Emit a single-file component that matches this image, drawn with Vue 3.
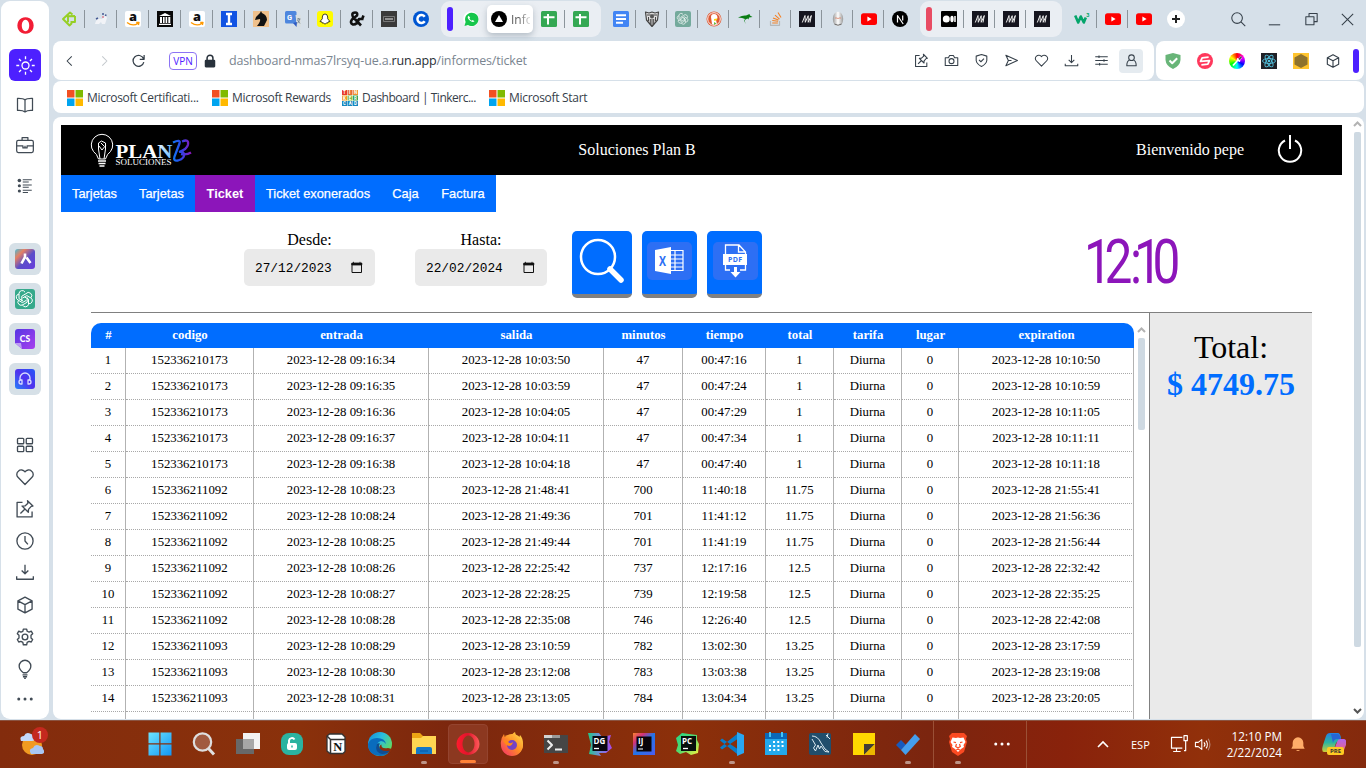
<script setup>
import { h } from 'vue'

const M = '<rect width="16" height="16" fill="#15151f" stroke="none"/><path d="M3.300 11.500 6 4.500M6 4.500 6.300 11.300 9.200 4.700 9.200 11.300 12.300 4.500M12.300 4.500 11 11.500" stroke="#eee" stroke-width="1"/>'
const amazon = '<rect width="16" height="16" rx="2" fill="#fff" stroke="none"/><text x="8" y="10" font-family="Open Sans" font-weight="800" font-size="13" textLength="8" lengthAdjust="spacingAndGlyphs" text-anchor="middle" fill="#111" stroke="none">a</text><path d="M2 11.500Q8 16 13 12.200 M11.200 11.500 14 11.300 13.400 14" stroke="#f90" stroke-width="1.300"/>'
const sheet = '<rect width="16" height="16" rx="1.500" fill="#34a853" stroke="none"/><path d="M2.500 6.200h11M7 3v10.500" stroke="#fff" stroke-width="2"/>'
const youtube = '<rect y="2.300" width="16" height="11.600" rx="2.500" fill="#f00" stroke="none"/><path d="M6.400 5.600v5l4.200-2.500z" fill="#fff" stroke="none"/>'
const knot = '<g stroke="#fff" stroke-width="1"><path d="M12 5.200a3.200 3.200 0 0 0-6 1.500v5l4 2.300 M6 7a3.200 3.200 0 0 0-1 6l4.400 2.600 4-2.300"/><path d="M5.300 13.500a3.200 3.200 0 0 0 4.600 4.200l4.300-2.500v-4.800 M9.500 18a3.200 3.200 0 0 0 6-.6v-5.200l-4-2.300 M15.600 16.700a3.200 3.200 0 0 0 2.700-5.500l-4.500-2.600-4.200 2.400 M18 10.700a3.200 3.200 0 0 0-5-4L8.800 9.200V14"/></g>'
const cube = '<path d="M12 2.500 20.500 7v10L12 21.500 3.500 17V7z M3.500 7 12 11.500 20.500 7 M12 11.500v10"/>'
const heart = '<path d="M12 21 3.600 12.400A5 5 0 0 1 4 5a5.300 5.300 0 0 1 8 .8A5.300 5.300 0 0 1 20 5a5 5 0 0 1 .4 7.400z"/>'
const pin = '<path d="M9 4H2.500v17.500H20.500V15"/><path d="m15 2 6.500 6.500-2 .3-3.300 3.700-.2 3.500-7.500-7.500 3.500-.2 3.500-3.300z M12 12l-5.500 5.500"/>'
const download = '<path d="M12 3v12M7.500 11 12 15.500 16.500 11M2 17v3.500h20V17"/>'

const icons = {
  codecademy: '<path d="M11.500 3.500 9 1.500 2 8l6.500 6.500 2.500-2.500M14 5 7 5.200v6M14 5v6L9.500 11" stroke="#96cf24" stroke-width="1.900"/>',
  dog: '<path d="M2 13q1-6 7-5l4-4 1 3-2 6H9l-1-2-2 2z" fill="#f1f3f7" stroke="none"/><path d="M9 3h2M12 4l1.500.5M3 8l2-1" stroke="#465a93"/><circle cx="10" cy="6" r=".8" fill="#df3e54" stroke="none"/>',
  amazon, amazon2: amazon, sheet, sheet2: sheet, youtube, M,
  museum: '<rect width="16" height="16" fill="#080808" stroke="none"/><path d="m2 5 6-3 6 3zM3 6h2v6H3zM6 6h1.600v6H6zM8.600 6h1.600v6H8.600zM11.300 6h2v6h-2zM2 12.700h12V14H2z" fill="#fff" stroke="none"/>',
  ibeam: '<rect width="16" height="16" fill="#1153e3" stroke="none"/><path d="M5 3h6M5 13h6M8 3v10" stroke="#fff" stroke-width="2.400"/>',
  knight: '<rect width="16" height="16" fill="#efc08b" stroke="none"/><path d="M4 15q4-5 3-7l-5 1 1-3 4-4 1-2 1 2q5 2 5 7l-3 6z" fill="#111" stroke="none"/>',
  translate: '<rect width="11.500" height="12.500" rx="1.500" fill="#4d86de" stroke="none"/><path d="M10.500 4H16v12H9.500l2-3.500z" fill="#d8dfe2" stroke="none"/><path d="m8 12 3.500 4L12 11z" fill="#2d5ac2" stroke="none"/><text x="2" y="9" font-family="Roboto" font-weight="700" font-size="7.500" fill="#fff" stroke="none">G</text><path d="M12 8h3.500M13.700 7v1M12 12.500q2.500-1.500 2.500-4.500M12.400 9l2.600 3.500" stroke="#637078" stroke-width=".7"/>',
  snap: '<rect width="16" height="16" rx="3" fill="#fffc00" stroke="none"/><path d="M5.300 6q.2-3 2.700-3t2.700 3v1.800l2.300 2.700-2 .5-.5 1.200-1.200-.1L8 13.200l-1.300-1.100-1.200.1L5 11l-2-.5 2.300-2.700z" fill="#fff" stroke="#111" stroke-width=".8"/>',
  amp: '<path d="M12 14.500 4 6Q2 1.500 6 1.500q3 0 2 3L3 8.500q-2.500 3.500 1 5 4 .5 6-5.500h4.500M14.500 4.500l-1.500 4" stroke="#111" stroke-width="2.600"/>',
  board: '<rect width="16" height="16" fill="#3a3a3a" stroke="none"/><rect x="2.500" y="5.500" width="11" height="5" stroke="#888" stroke-width=".8"/><path d="M4 8h8" stroke="#aaa" stroke-width="1.600"/>',
  coursera: '<circle cx="8" cy="8" r="8" fill="#0056d2" stroke="none"/><path d="M11.700 5.700a4 4 0 1 0 0 4.600" stroke="#fff" stroke-width="2.500"/>',
  whatsapp: '<circle cx="8" cy="8" r="7.800" fill="#fff" stroke="none"/><path d="M1.500 15 2.600 11A6.700 6.700 0 1 1 5 13.900z" fill="#16c64b" stroke="none"/><path d="M5.500 4.700q-2 1.700 1 4.600 3.200 3 5 1l-1.800-1.400-1 .8Q7 9 6.400 7.300l.8-.8z" fill="#fff" stroke="none"/>',
  triangle: '<circle cx="8" cy="8" r="8" fill="#000" stroke="none"/><path d="m8 4 4 7H4z" fill="#fff" stroke="none"/>',
  docs: '<rect width="16" height="16" rx="1.500" fill="#4285f4" stroke="none"/><path d="M3 4.200h10M3 8h10M3 11.800h7" stroke="#fff" stroke-width="1.900"/>',
  crest: '<path d="M1.500 1 5 2l3-1 3 1 3.500-1-1 8L8 15.500 2.500 9z" fill="#ddd" stroke="#444" stroke-width="1.200"/><path d="M4.500 6v4M6.300 8v5M8 8v6M9.700 8v5M11.500 6v4M3 4h10" stroke="#333" stroke-width=".9"/><circle cx="8" cy="5.500" r="2" fill="#555" stroke="none"/>',
  gpt: '<rect width="16" height="16" rx="2" fill="#74aa9c" stroke="none"/><g transform="scale(.667)">' + knot + '</g>',
  duck: '<circle cx="8" cy="8" r="7.500" fill="#de5833" stroke="none"/><circle cx="8" cy="8" r="6.300" stroke="#fff" stroke-width=".9"/><path d="M6 13 5 6q0-3 3-3 3.500 0 3.500 4l-1.500 2 1 4.200q-3 1.300-5-.2z" fill="#fff" stroke="none"/><path d="m8 8 3.500-.5-1 2-2.500.3z" fill="#fdd20a" stroke="none"/><path d="m8 11 2.500 1.500L8 14" fill="#65bc46" stroke="none"/>',
  kangaroo: '<path d="M1 6.500q5-2.500 8-2l3.500-1.500.5 1.500 2.500 1.500-3.500.5-.5 2-1-1-2 1-1 1.500L9 13 7 10l1-2-3-1z" fill="#0a7d14" stroke="none"/>',
  stack: '<path d="M2.500 10v4.300h9V10" stroke="#b5b8ba" stroke-width="1.200"/><path d="M4.200 12h5.700M4.300 9.500l5.800.8M5 7l5.500 2M7 4.200l4.500 4M10 1.500 13 6.500" stroke="#f48024" stroke-width="1.100"/>',
  egg: '<ellipse cx="8" cy="8" rx="5.200" ry="7.300" fill="url(#egg)" stroke="none"/><path d="M5 7h2l1 .7 1-.7h2" stroke="#da7355" stroke-width=".7"/><path d="M4.500 13q3.500 2.500 7 0" stroke="#666" stroke-width="1"/>',
  next: '<circle cx="8" cy="8" r="8" fill="#000" stroke="none"/><path d="M5.500 11.500v-7l5.700 8.500M10.700 4.500v5" stroke="#fff" stroke-width="1.200"/>',
  medium: '<rect width="16" height="16" rx="1" fill="#000" stroke="none"/><circle cx="5.300" cy="8" r="3.500" fill="#fff" stroke="none"/><ellipse cx="11" cy="8" rx="1.700" ry="3.300" fill="#fff" stroke="none"/><path d="M14 5v6" stroke="#fff"/>',
  w3: '<path d="m1.200 4.500 3 7 2.600-6 3 6 2-5" stroke="#04a56b" stroke-width="2.600"/><text x="12.300" y="6" font-family="Roboto" font-weight="700" font-size="5.500" fill="#04a56b" stroke="none">3</text>',
  ms: '<path d="M0 0h7.500v7.500H0z" fill="#f25022" stroke="none"/><path d="M8.500 0H16v7.500H8.500z" fill="#7fba00" stroke="none"/><path d="M0 8.500h7.500V16H0z" fill="#00a4ef" stroke="none"/><path d="M8.500 8.500H16V16H8.500z" fill="#ffb900" stroke="none"/>',
  tinker: '<path d="M0 0h5v5H0z" fill="#e83b2c" stroke="none"/><path d="M5.500 0h5v5h-5z" fill="#e76b34" stroke="none"/><path d="M11 0h5v5h-5z" fill="#f19132" stroke="none"/><path d="M0 5.500h5v5H0z" fill="#f19b21" stroke="none"/><path d="M5.500 5.500h5v5h-5z" fill="#86b940" stroke="none"/><path d="M11 5.500h5v5h-5z" fill="#2fa355" stroke="none"/><path d="M0 11h5v5H0zM5.500 11h5v5h-5zM11 11h5v5h-5z" fill="#1687bf" stroke="none"/><g font-family="Roboto" font-weight="700" font-size="4.500" fill="#fff" stroke="none"><text x="1 7 12" y="4.200">TIN</text><text x="1 6.700 12" y="9.700">KER</text><text x="1 6.700 12" y="15.200">CAD</text></g>',
  shield: '<path d="M8 0 15.500 2v5Q15 13 8 16 1 13 .5 7V2z" fill="#68b578" stroke="none"/><path d="m4.500 7.500 2.700 2.700 5-5" stroke="#fff" stroke-width="2"/>',
  pink: '<circle cx="8" cy="8" r="8" fill="#ff385c" stroke="none"/><path d="M12 4.500H5.500L3.500 8h9l-2 3.500H4" stroke="#fff" stroke-width="1.800" transform="rotate(-6 8 8)"/>',
  react: '<rect width="16" height="16" fill="#202127" stroke="none"/><g stroke="#53c1de" stroke-width=".9"><ellipse cx="8" cy="8" rx="6.500" ry="2.500"/><ellipse cx="8" cy="8" rx="6.500" ry="2.500" transform="rotate(60 8 8)"/><ellipse cx="8" cy="8" rx="6.500" ry="2.500" transform="rotate(120 8 8)"/></g><circle cx="8" cy="8" r="1.300" fill="#53c1de" stroke="none"/>',
  hex: '<rect width="16" height="16" fill="#ffc42e" stroke="none"/><path d="m8 1 6.500 3.500v7L8 15l-6.500-3.500v-7z" fill="#8e722c" stroke="none"/>',
  dropper: '<path d="m4 12.500 5-5.500M8 5.500l3 3M9.500 7l3-3" stroke="#fff" stroke-width="1.800"/><path d="m10 6.500 2.500-2.800" stroke="#444" stroke-width="1.400"/>',
  opera: '<path fill-rule="evenodd" d="M12 1.500a10.300 10.500 0 1 0 .01 0zM12 4.600a4.700 7.400 0 1 1-.01 0z" fill="#f21d35" stroke="none"/>',
  operaBig: '<path fill-rule="evenodd" d="M12 1a11.500 11 0 1 0 .01 0zM12.500 3.500a6 8.500 0 1 1-.01 0z" fill="url(#op)" stroke="none"/>',
  sun: '<circle cx="12" cy="12" r="4"/><path d="M12 1.500v3.300M12 19.200v3.300M1.500 12h3.300M19.200 12h3.300M4.600 4.600l2.300 2.300M17.100 17.100l2.300 2.300M4.600 19.400l2.300-2.300M17.100 6.900l2.300-2.300"/>',
  book: '<path d="M12 6q-2-2.200-9-2v14.500q6-.5 9 1.800 3-2.300 9-1.800V4q-7-.2-9 2v14"/>',
  briefcase: '<rect x="2" y="6.500" width="20" height="14.500" rx="2"/><path d="M8.500 6V3h7v3M2 13h7.500v2.500h5V13H22M12 13v2"/>',
  list: '<path d="M9 5h12M9 8h8M9 12h12M9 15h8M9 19h12M9 22h7" stroke-width="1.600"/><g fill="currentColor" stroke="none"><circle cx="4.500" cy="6" r="2.400"/><circle cx="4.500" cy="13" r="2.100"/><circle cx="4.500" cy="20" r="2.100"/></g>',
  aria: '<rect x="2" y="2" width="20" height="20" rx="3" fill="url(#aria)" stroke="none"/><path d="M12 6.500v3.500l-3.500 6.500M13.500 10.500l4 5.500" stroke="#fff" stroke-width="2.600"/>',
  gptBig: '<rect x="2" y="2" width="20" height="20" rx="3" fill="#36a98b" stroke="none"/>' + knot,
  cs: '<path d="M5 2h14q3 0 3 3v14q0 3-3 3H9l-7-6V5q0-3 3-3z" fill="url(#violet)" stroke="none"/><path d="M2 16h6l1 6z" fill="#bd9bf2" stroke="none"/><text x="12" y="15" text-anchor="middle" font-family="Lato" font-weight="900" font-size="8.500" fill="#fff" stroke="none">CS</text>',
  phones: '<rect x="2" y="2" width="20" height="20" rx="3" fill="url(#violet2)" stroke="none"/><path d="M7 14v-3a5 5 0 0 1 10 0v3M9 13v4H8a2 2 0 0 1 0-4zM15 13v4h1a2 2 0 0 0 0-4z" stroke="#d9dcff" stroke-width="1.300"/>',
  grid: '<rect x="3" y="4" width="7.500" height="6.500" rx="1"/><rect x="13.500" y="4" width="7.500" height="6.500" rx="1"/><rect x="3" y="13.500" width="7.500" height="6.500" rx="1"/><rect x="13.500" y="13.500" width="7.500" height="6.500" rx="1"/>',
  heart, pin, cube, download,
  clock: '<circle cx="12" cy="12" r="9.700"/><path d="M12 6v6l3.500 4"/>',
  downloadSide: '<path d="M12 2v10M8 9l4 4 4-4M2 16v3.500h20V16"/>',
  gear: '<path d="m10 2.500-.6 2.700-2.300 1L4.500 5 2.800 8l2 1.900v3.200L2.800 15l1.700 3 2.600-.8 2.300 1.300.6 2.800h4l.6-2.800 2.300-1.300 2.600.8 1.700-3-2-1.900V9.900l2-1.900-1.700-3-2.600 1.100-2.300-1L14 2.500z"/><circle cx="12" cy="12" r="3.400"/>',
  bulb: '<path d="M10 16.500Q5 13 5 8.500a7 7 0 0 1 14 0q0 4.500-5 8zM9 19h6M9.500 21.300h5M11 23.300h2"/>',
  dots: '<g fill="currentColor" stroke="none"><circle cx="4.500" cy="12" r="1.800"/><circle cx="12" cy="12" r="1.800"/><circle cx="19.500" cy="12" r="1.800"/></g>',
  search: '<circle cx="10" cy="10" r="7.500"/><path d="m15.500 15.500 6 6"/>',
  min: '<path d="M4 19.500h16"/>',
  restore: '<rect x="4" y="8" width="11.500" height="11.500"/><path d="M8.500 8V3.500H20V15h-4.500"/>',
  close: '<path d="m4 4 16 16M20 4 4 20"/>',
  back: '<path d="m15 4-8 8 8 8"/>', fwd: '<path d="m9 4 8 8-8 8"/>',
  reload: '<path d="M20 9a8.700 8.700 0 1 0 .5 5.500M21 3v7h-7"/>',
  camera: '<path d="M2 7.500h5L9 4h6l2 3.500h5V20H2z"/><circle cx="12" cy="13" r="4"/>',
  safe: '<path d="M12 2.500 20.500 5v7q-1 6-8.500 9.500Q4.500 18 3.500 12V5zM8 11l3 3 5-5"/>',
  send: '<path d="M3 3.500 21.500 12 3 20.500 7 12z M7 12h5"/>',
  sliders: '<path d="M2 6h20M2 12h20M2 18h20M8 4v4M16 10v4M9 16v4"/>',
  person: '<circle cx="12" cy="7.500" r="4.500"/><path d="M8.500 11.500Q4.500 12.500 4.500 20.500h15q0-8-4-9"/>',
  lock: '<rect x="3" y="10" width="18" height="13" rx="2" fill="currentColor" stroke="none"/><path d="M7 11V7a5 5 0 0 1 10 0v4" stroke-width="2.600"/>',
  windows: '<path d="M.5.5H11.300V11.300H.5zM12.500.5H23.500V11.300h-11zM.5 12.500H11.300V23.500H.5zM12.500 12.500H23.500V23.500h-11z" fill="url(#win)" stroke="none"/>',
  find: '<circle cx="10.500" cy="10" r="8.700" fill="#a15a3f" stroke="#dedede" stroke-width="2.200"/><path d="m16.500 16.500 5.500 6" stroke="#e0e0e0" stroke-width="3"/>',
  task: '<path d="M7 1h17v16H7z" fill="#f2f2f2" stroke="none"/><path d="M0 7h18v15H0z" fill="#686868" stroke="none"/><path d="M7 7h11v10H7z" fill="#a7a7a7" stroke="none"/>',
  vault: '<rect x="1" y="1" width="22" height="22" rx="8" fill="#2bb3a0" stroke="none"/><rect x="7" y="11" width="10" height="7" rx="2" fill="#fff" stroke="none"/><path d="M9 12V8.500a3 3 0 0 1 5.500-1" stroke="#fff" stroke-width="2"/><path d="M12 13.500v2" stroke="#2bb3a0"/>',
  notion: '<path d="m3 4 2.500-2H18l3 3v14.500L19 21.500H6L3 19z" fill="#fff" stroke="#333" stroke-width="1.300"/><path d="m3 4 3.500 3.500H21M6.500 7.500v14" stroke="#333"/><text x="13.700" y="18.500" text-anchor="middle" font-family="Liberation Serif" font-weight="700" font-size="13" textLength="9" lengthAdjust="spacingAndGlyphs" fill="#111" stroke="none">N</text>',
  edge: '<circle cx="12" cy="12" r="12" fill="url(#edge)" stroke="none"/><path d="M0 12q2-6 9-6 8 0 9 6-2-3-5-3-4 1-4 5 1 7 12 6-3 4-9 4Q0 23 0 12" fill="#0a6cbd" stroke="none"/><path d="M13.500 12.500q-1 4.500 6.500 3.500l4 1-1.500 3q-9 3-11-3-1-3 2-4.500z" fill="#892e0c" stroke="none"/><path d="M9 12q-3 8 5 10 5 0 8-3.500-9 2-11-3.500-.5-2 1-3.500-2-.5-3 .5z" fill="#104d91" stroke="none"/>',
  folder: '<path d="M0 1h8l3 3h13v18H0z" fill="#eda414" stroke="none"/><path d="M0 6h9l2-2h13v18H0z" fill="#ffd652" stroke="none"/><path d="M4 22v-5q0-2 2-2h12q2 0 2 2v5z" fill="#1477c8" stroke="none"/><path d="M8 19h8" stroke="#0556a4" stroke-width="1"/>',
  firefox: '<circle cx="12" cy="13" r="11" fill="url(#fire)" stroke="none"/><path d="M5 6 4 2Q0 7 1 13q3 11 12 10 10-1 10-11 0-6-3-9l-1 3Q16 5 15 0q-5 3-4 7z" fill="url(#fire)" stroke="none"/><circle cx="12" cy="13" r="5" fill="#7443c5" stroke="none"/><path d="m3 8 5 1q1 4 5 1-1 4-4 4-4-1-6-6z" fill="#ff8a16" stroke="none"/>',
  terminal: '<path d="M0 3h24v18H0z" fill="#464646" stroke="none"/><path d="M0 3h8v3H0z" fill="#d2d2d2" stroke="none"/><path d="M8 3h8v3H8z" fill="#999" stroke="none"/><path d="m3.500 8.500 4.500 4.500-4.500 4.500M11 17.500h7" stroke="#eee" stroke-width="2"/>',
  dg: '<path d="m0 1 11 0 3 4 9-2-2 7 3 6-6 5-7 0 2 3-12-2 2-9z" fill="url(#dg)" stroke="none"/><path d="M4.500 4h15v15h-15z" fill="#0a0710" stroke="none"/><text x="5.500" y="11.500" font-family="Open Sans" font-weight="700" font-size="8" fill="#fff" stroke="none">DG</text><path d="M6 16.500h5" stroke="#fff" stroke-width="1.300"/>',
  ij: '<path d="M1 1h22v22H1z" fill="url(#ij)" stroke="none"/><path d="M4.500 4.500h15v15h-15z" fill="#08040b" stroke="none"/><text x="6" y="12" font-family="Open Sans" font-weight="700" font-size="8" fill="#fff" stroke="none">IJ</text><path d="M6 17h5" stroke="#ccc" stroke-width="1.300"/>',
  pc: '<path d="m0 6 6-5 7 1 8 1 0 5 2 4-1 9-7 2-5-3-6 2-4-3 2-6z" fill="url(#pc)" stroke="none"/><path d="M5 4h15v15H5z" fill="#07100c" stroke="none"/><text x="6" y="11.500" font-family="Open Sans" font-weight="700" font-size="8" fill="#fff" stroke="none">PC</text><path d="M7 16.500h5" stroke="#fff" stroke-width="1.300"/>',
  code: '<path d="m0 8.500 2-2L19 18v5.500z M0 15.500l2 2L19 6V.5z" fill="#087dcb" stroke="none"/><path d="m17 0 7 3v18l-7 3V0z" fill="#29a7f2" stroke="none"/>',
  calendar: '<path d="M1 3h22v20H1z" fill="#23a9ec" stroke="none"/><path d="M1 1h22v6H1z" fill="#0b68b8" stroke="none"/><path d="M6 0v5M18 0v5" stroke="#44c5f7" stroke-width="2"/><path d="M9 10h11M5 14h15M5 18h11" stroke="#fff" stroke-width="2" stroke-dasharray="2 2.200"/>',
  mysql: '<rect x="1" y="1" width="22" height="22" rx="2" fill="#214e6c" stroke="none"/><path d="M4 4q6 0 9 7l4 6 4 3-4-.5-4-5.500-1.500 3-1.500-4-2.500 6-2-3 2-3-3.500-6M18 3l4 4M20 1.500l-1 4" stroke="#ddebf2" stroke-width="1"/>',
  note: '<path d="M1 1h22v12L13 23H1z" fill="#ffd800" stroke="none"/><path d="M12 12h11L12 23z" fill="#423e35" stroke="none"/><path d="m23 12-11 11h11z" fill="#ecb800" stroke="none"/>',
  todo: '<path d="m0 13 5-5 5 5-5 5z" fill="#185abd" stroke="none"/><path d="m5 18 4.500 5L24 7l-5-5z" fill="#459eed" stroke="none"/>',
  brave: '<path d="m6 1 12 0 3 3-1 3 1 3-3 10-6 4-6-4L3 10l1-3-1-3z" fill="#fb4a22" stroke="none"/><path d="m6.500 5.500 3.500.5 2-.5 2 .5 3.500-.5 2 4.500-2 3 .5 2-3 2-3 3-3-3-3-2 .5-2-2-3z" fill="#fff" stroke="none"/><path d="m7.500 10 2.500.7M16.500 10l-2.500.7M10.500 12l-.8 2.500 2.300 1.500 2.300-1.500-.8-2.500M10 18l2-.8 2 .8" stroke="#fb4a22" stroke-width="1.200"/>',
  weather: '<circle cx="12" cy="13" r="10" fill="#f19a21" stroke="none"/><path d="M1 9q-2-5 3-5 2-5 7-2 4 1 4 4t-3 3z" fill="#c3d9fa" stroke="none"/><path d="M11 22q-3-5 2-6 2-5 7-2 3 0 3 3 3 4-1 5z" fill="#a9c7f3" stroke="none"/>',
  net: '<path d="M16 4H3v13h13M9 17v4M5 21h9M18 4v4h4V2h-4zM20 8v12h-2" stroke="#fff"/>',
  speaker: '<path d="M2 9h4l5-4v14l-5-4H2zM14 9q3 3 0 6M17 6.500q4 5.500 0 11" stroke="#fff"/><path d="M20 4q5 8 0 16" stroke="#b98b7c"/>',
  bell: '<path d="M4 10a8 8 0 0 1 16 0v5l2 4H2l2-4zM9 21h6q-3 3-6 0" fill="#ffad69" stroke="none"/>',
  copilot: '<path d="M8 1h8q2 0 3 5l-5 5-3 9H2q-3 0-1-7L4 4q1-3 4-3z" fill="url(#cop1)" stroke="none"/><path d="M18 7h4q3 0 2 6l-2 5q-1 3-5 3h-6l4-11q1-3 3-3z" fill="url(#cop2)" stroke="none"/><path d="M9 2h6q3 0 4 5h-4q-3 0-4 4z" fill="#2765d5" stroke="none"/>',
}

const Icon = (p) => h('svg', {
  viewBox: `0 0 ${p.box || 24} ${p.box || 24}`, width: p.s, height: p.s,
  fill: 'none', stroke: 'currentColor', 'stroke-width': p.w || 1.5,
  'stroke-linejoin': 'round', innerHTML: icons[p.n],
})

const tabsA = ['codecademy', 'dog', 'amazon', 'museum', 'amazon2', 'ibeam', 'knight', 'translate', 'snap', 'amp', 'board', 'coursera']
const tabsB = ['docs', 'crest', 'gpt', 'duck', 'kangaroo', 'stack', 'M', 'egg', 'youtube', 'next']
const tabsC = ['medium', 'M', 'M', 'M']
const tabsD = ['w3', 'youtube', 'youtube']
const actions = ['pin', 'camera', 'safe', 'send', 'heart', 'download', 'sliders']
const bookmarks = [
  { icon: 'ms', text: 'Microsoft Certificati...', w: 145 },
  { icon: 'ms', text: 'Microsoft Rewards', w: 130 },
  { icon: 'tinker', text: 'Dashboard | Tinkerc...', w: 147, tight: true },
  { icon: 'ms', text: 'Microsoft Start', w: 110 },
]
const nav = [['Tarjetas', 67], ['Tarjetas', 67], ['Ticket', 60], ['Ticket exonerados', 126], ['Caja', 49], ['Factura', 66]]
const heads = ['#', 'codigo', 'entrada', 'salida', 'minutos', 'tiempo', 'total', 'tarifa', 'lugar', 'expiration']
const d = '2023-12-28 '
const raw = [
  ['152336210173', '09:16:34', '10:03:50', '47', '00:47:16', '1', '10:10:50'],
  ['152336210173', '09:16:35', '10:03:59', '47', '00:47:24', '1', '10:10:59'],
  ['152336210173', '09:16:36', '10:04:05', '47', '00:47:29', '1', '10:11:05'],
  ['152336210173', '09:16:37', '10:04:11', '47', '00:47:34', '1', '10:11:11'],
  ['152336210173', '09:16:38', '10:04:18', '47', '00:47:40', '1', '10:11:18'],
  ['152336211092', '10:08:23', '21:48:41', '700', '11:40:18', '11.75', '21:55:41'],
  ['152336211092', '10:08:24', '21:49:36', '701', '11:41:12', '11.75', '21:56:36'],
  ['152336211092', '10:08:25', '21:49:44', '701', '11:41:19', '11.75', '21:56:44'],
  ['152336211092', '10:08:26', '22:25:42', '737', '12:17:16', '12.5', '22:32:42'],
  ['152336211092', '10:08:27', '22:28:25', '739', '12:19:58', '12.5', '22:35:25'],
  ['152336211092', '10:08:28', '22:35:08', '746', '12:26:40', '12.5', '22:42:08'],
  ['152336211093', '10:08:29', '23:10:59', '782', '13:02:30', '13.25', '23:17:59'],
  ['152336211093', '10:08:30', '23:12:08', '783', '13:03:38', '13.25', '23:19:08'],
  ['152336211093', '10:08:31', '23:13:05', '784', '13:04:34', '13.25', '23:20:05'],
]
const rows = raw.map((r, i) => [i + 1, r[0], d + r[1], d + r[2], r[3], r[4], r[5], 'Diurna', '0', d + r[6]])
rows.push(Array(10).fill(''))
const dates = [['Desde:', '27/12/2023'], ['Hasta:', '22/02/2024']]
const apps = [
  ['windows'], ['find'], ['task'], ['vault'], ['notion'], ['edge'], ['folder', 1], ['operaBig', 2], ['firefox'], ['terminal', 1],
  ['dg'], ['ij'], ['pc'], ['code', 1], ['calendar'], ['mysql'], ['note'], ['todo', 1],
]
</script>

<template>
  <div class="screen">
    <svg class="defs" width="0" height="0">
      <defs>
        <linearGradient id="egg"><stop stop-color="#999" /><stop offset=".5" stop-color="#fff" /><stop offset="1" stop-color="#999" /></linearGradient>
        <linearGradient id="op" x2="1" y2="0"><stop stop-color="#ff1b2d" /><stop offset=".5" stop-color="#e0142c" /><stop offset="1" stop-color="#ff5a5a" /></linearGradient>
        <linearGradient id="aria" x2="1" y2="1"><stop stop-color="#46bdd7" /><stop offset=".25" stop-color="#e58064" /><stop offset=".55" stop-color="#5b4ec9" /><stop offset="1" stop-color="#693ddd" /></linearGradient>
        <linearGradient id="violet" x2="1" y2="1"><stop stop-color="#5535e3" /><stop offset="1" stop-color="#a83fee" /></linearGradient>
        <linearGradient id="violet2" x1="0" y1="1" x2="1" y2="0"><stop stop-color="#2580fa" /><stop offset=".5" stop-color="#5031ed" /><stop offset="1" stop-color="#2458f8" /></linearGradient>
        <linearGradient id="win" x2="1" y2="1"><stop stop-color="#6de4ff" /><stop offset="1" stop-color="#1296f5" /></linearGradient>
        <linearGradient id="edge" x2="1" y2=".6"><stop stop-color="#1588d5" /><stop offset=".5" stop-color="#28bde0" /><stop offset="1" stop-color="#62db62" /></linearGradient>
        <linearGradient id="fire" x1="1" x2="0" y2="1"><stop stop-color="#ffe14c" /><stop offset=".5" stop-color="#ff8b25" /><stop offset="1" stop-color="#f32a70" /></linearGradient>
        <linearGradient id="dg" x2="1"><stop stop-color="#22c987" /><stop offset=".5" stop-color="#7587dd" /><stop offset="1" stop-color="#a847e8" /></linearGradient>
        <linearGradient id="ij" x2="1" y2="1"><stop stop-color="#f98231" /><stop offset=".25" stop-color="#d53278" /><stop offset=".5" stop-color="#2275e8" /><stop offset="1" stop-color="#4d5cf0" /></linearGradient>
        <linearGradient id="pc" x2="1" y2="1"><stop stop-color="#21d789" /><stop offset=".5" stop-color="#58d96b" /><stop offset="1" stop-color="#f9f33d" /></linearGradient>
        <linearGradient id="cop1" x1="0" y1="0" x2="0" y2="1"><stop stop-color="#2480e5" /><stop offset=".5" stop-color="#2bb5a0" /><stop offset="1" stop-color="#d0ce36" /></linearGradient>
        <linearGradient id="cop2" x1="0" y1="0" x2="0" y2="1"><stop stop-color="#b163ef" /><stop offset="1" stop-color="#f46772" /></linearGradient>
        <linearGradient id="brand"><stop stop-color="#1179f5" /><stop offset=".45" stop-color="#2d45e8" /><stop offset="1" stop-color="#8c15ba" /></linearGradient>
        <linearGradient id="plan"><stop offset=".7" stop-color="#fff" /><stop offset="1" stop-color="#63b6ff" /></linearGradient>
      </defs>
    </svg>

    <div class="browser">
      <aside class="sidebar">
        <div class="cell"><Icon n="opera" :s="19" /></div>
        <div class="cell"><span class="tile violet"><Icon n="sun" :s="21" /></span></div>
        <div class="cell"><Icon n="book" :s="20" /></div>
        <div class="cell"><Icon n="briefcase" :s="20" /></div>
        <div class="cell"><Icon n="list" :s="18" /></div>
        <div class="space one"></div>
        <div v-for="n in ['aria', 'gptBig', 'cs', 'phones']" :key="n" class="cell"><span class="tile"><Icon :n="n" :s="24" /></span></div>
        <div class="space two"></div>
        <div v-for="n in ['grid', 'heart', 'pin', 'clock', 'downloadSide', 'cube', 'gear', 'bulb', 'dots']" :key="n" class="cell small"><Icon :n="n" :s="20" :w="1.6" /></div>
      </aside>

      <div class="main">
        <header class="tabs">
          <span v-for="(n, i) in tabsA" :key="i" class="tab wide" :class="{ sep: i < 11 }"><Icon :n="n" :s="16" :box="16" /></span>
          <div class="group first">
            <i class="stripe"></i>
            <span class="tab plain"><Icon n="whatsapp" :s="16" :box="16" /></span>
            <span class="active"><Icon n="triangle" :s="16" :box="16" /><b>Info</b></span>
            <span class="tab wide sep"><Icon n="sheet" :s="16" :box="16" /></span>
            <span class="tab wide"><Icon n="sheet" :s="16" :box="16" /></span>
          </div>
          <span v-for="(n, i) in tabsB" :key="'b' + i" class="tab" :class="{ sep: i < 9 }"><Icon :n="n" :s="16" :box="16" /></span>
          <div class="group second">
            <i class="stripe red"></i>
            <span v-for="(n, i) in tabsC" :key="i" class="tab" :class="{ sep: i < 3 }"><Icon :n="n" :s="16" :box="16" /></span>
          </div>
          <span v-for="(n, i) in tabsD" :key="'d' + i" class="tab" :class="{ sep: i < 2 }"><Icon :n="n" :s="16" :box="16" /></span>
          <span class="plus"></span>
          <div class="window"><Icon n="search" :s="17" /><Icon n="min" :s="17" /><Icon n="restore" :s="17" /><Icon n="close" :s="17" /></div>
        </header>

        <div class="bars">
          <div class="address">
            <Icon class="navi" n="back" :s="14" :w="1.8" /><Icon class="navi dim" n="fwd" :s="14" :w="1.8" /><Icon class="navi" n="reload" :s="15" :w="2" />
            <span class="vpn">VPN</span>
            <Icon class="lock" n="lock" :s="14" />
            <span class="url">dashboard-nmas7lrsyq-ue.a.<em>run.app</em>/informes/ticket</span>
            <div class="actions">
              <span v-for="n in actions" :key="n"><Icon :n="n" :s="15" :w="1.7" /></span>
              <span class="profile"><Icon n="person" :s="15" :w="1.7" /></span>
            </div>
          </div>
          <div class="extensions">
            <Icon n="shield" :s="16" :box="16" /><Icon n="pink" :s="16" :box="16" />
            <span class="wheel"><Icon n="dropper" :s="16" :box="16" /></span>
            <Icon n="react" :s="16" :box="16" /><Icon n="hex" :s="16" :box="16" /><Icon n="cube" :s="16" :w="1.7" />
            <i class="stripe"></i>
          </div>
        </div>

        <div class="bookmarks">
          <div v-for="b in bookmarks" :key="b.text" class="bm" :class="{ tight: b.tight }" :style="{ width: b.w + 'px' }"><Icon :n="b.icon" :s="16" :box="16" /><span>{{ b.text }}</span></div>
        </div>

        <div class="page">
          <div class="content">
            <div class="top">
              <svg class="logo" width="106" height="40" viewBox="0 0 106 40">
                <g fill="none" stroke="#fff" stroke-width="1">
                  <path d="M9.500 28 Q8 23 4.500 20.500 A10.700 10.700 0 1 1 21.500 20.500 Q18 23 16.500 28z" />
                  <path d="M11 28 9.500 18V12l3-2 4 2v6l-1.500 10M10 15l3 4 4-5M12 12l3 3" />
                </g>
                <path d="M9 30h8M9.500 32.500h7M10.500 35h5" stroke="#fff" stroke-width="1.300" />
                <text x="26.500" y="27" font-family="Liberation Serif" font-weight="700" font-size="19" textLength="57" lengthAdjust="spacingAndGlyphs" fill="url(#plan)">PLAN</text>
                <text x="26.500" y="34.300" font-family="Liberation Serif" font-size="9" textLength="56" lengthAdjust="spacingAndGlyphs" fill="#fff">SOLUCIONES</text>
                <path d="M84 11.500q8-3.500 6.500 1l-5 13q-1.500 5 3.500 4 7-2 6-6.500-1-3-5-2 8-2.500 9-7.500 1-6-6-3M92 23q6 1 10-1.500" fill="none" stroke="url(#brand)" stroke-width="2.300" />
              </svg>
              <span class="brand">Soluciones Plan B</span>
              <span class="hello">Bienvenido pepe</span>
              <svg class="power" width="26" height="30" viewBox="0 0 26 30" fill="none" stroke="#fff" stroke-width="2"><path d="M8 6.500A11.200 11.200 0 1 0 18 6.500M13 1v14" /></svg>
            </div>
            <nav class="menu"><a v-for="(n, i) in nav" :key="i" :class="{ on: i === 2 }" :style="{ width: n[1] + 'px' }">{{ n[0] }}</a></nav>

            <section class="filters">
              <label v-for="(t, i) in dates" :key="i" :class="'date d' + i"><span>{{ t[0] }}</span>
                <span class="field">{{ t[1] }}<svg width="12" height="13" viewBox="0 0 12 13"><path d="M1 2.500h9.500v9H1z" fill="none" stroke="#111" stroke-width="1" /><path d="M.8 2h10v2H.8zM2.500.8v2M9 .8v2" fill="#111" stroke="#111" stroke-width=".8" /></svg></span>
              </label>
              <div class="buttons">
                <span class="btn big"><svg width="60" height="63" viewBox="0 0 60 63" fill="none" stroke="#fff"><circle cx="26" cy="26" r="17" stroke-width="2.500" /><path d="m38 38 11 11" stroke-width="5.500" stroke-linecap="round" /></svg></span>
                <span class="btn"><svg width="55" height="63" viewBox="0 0 55 63"><rect x="5" y="11" width="45" height="38" rx="5" fill="#2d6ff4" /><path d="M28 19.500h13v20H28M33 19v21M29 24h12M29 28h12M29 32h12M29 36h12" fill="none" stroke="#fff" stroke-width="1.200" /><path d="m13 19 16-3v27l-16-3z" fill="#fff" /><text x="17" y="35" font-family="Open Sans" font-weight="700" font-size="14" textLength="7" lengthAdjust="spacingAndGlyphs" fill="#2d6ff4">X</text></svg></span>
                <span class="btn"><svg width="55" height="63" viewBox="0 0 55 63"><rect x="6" y="11" width="45" height="38" rx="5" fill="#2d6ff4" /><path d="M18.500 24V14H32l6.500 7v18H33M23 39h-4.500V33M31.500 14v7H38" fill="none" stroke="#fff" stroke-width="1.300" /><rect x="16" y="23" width="24" height="11" fill="#fff" /><path d="M28.500 36v7" stroke="#fff" stroke-width="3" /><path d="M23.500 41h10l-5 5.500z" fill="#fff" /><text x="21" y="31" font-family="Open Sans" font-weight="700" font-size="7" textLength="14" fill="#2d6ff4">PDF</text></svg></span>
              </div>
              <svg class="clock" width="104" height="70" viewBox="0 0 104 70"><text transform="scale(.8 1)" x="0 25.500 57.500 62.500 85.500" y="51" font-family="Roboto" font-size="62" fill="#8c15ba">12:10</text></svg>
            </section>

            <section class="report">
              <div class="grid">
                <table>
                  <colgroup><col v-for="(w, i) in [35, 128, 175, 175, 79, 83, 68, 68, 57, 175]" :key="i" :style="{ width: w + 'px' }" /></colgroup>
                  <thead><tr><th v-for="t in heads" :key="t">{{ t }}</th></tr></thead>
                  <tbody><tr v-for="(r, i) in rows" :key="i"><td v-for="(c, j) in r" :key="j">{{ c }}</td></tr></tbody>
                </table>
              </div>
              <div class="scroll"><svg width="9" height="6" viewBox="0 0 9 6"><path d="m1 5 3.500-3.500L8 5" fill="none" stroke="#b3b3b3" stroke-width="2" /></svg><i></i></div>
              <div class="total"><span>Total:</span><strong>$ 4749.75</strong></div>
            </section>
          </div>
          <div class="scroll outer"><svg width="9" height="6" viewBox="0 0 9 6"><path d="m1 5 3.500-3.500L8 5" fill="none" stroke="#b3b3b3" stroke-width="2" /></svg><i></i><svg class="down" width="9" height="6" viewBox="0 0 9 6"><path d="m1 1 3.500 3.500L8 1" fill="none" stroke="#555" stroke-width="2" /></svg></div>
        </div>
      </div>
    </div>

    <footer class="taskbar">
      <div class="weather"><Icon n="weather" :s="24" /><b>1</b></div>
      <div class="apps">
        <span v-for="a in apps" :key="a[0]" class="app" :class="{ run: a[1], current: a[1] === 2 }"><Icon :n="a[0]" :s="24" /></span>
      </div>
      <div class="pinned"><span class="app run"><Icon n="brave" :s="24" /></span><span class="app"><Icon n="dots" :s="20" /></span></div>
      <div class="tray">
        <svg class="chev" width="12" height="8" viewBox="0 0 12 8"><path d="m1 7 5-5 5 5" fill="none" stroke="#fff" stroke-width="1.600" /></svg>
        <span class="lang">ESP</span>
        <Icon n="net" :s="20" :w="1.4" /><Icon class="spk" n="speaker" :s="17" :w="1.5" />
        <div class="time"><span>12:10 PM</span><span>2/22/2024</span></div>
        <Icon class="bell" n="bell" :s="16" />
        <div class="copilot"><Icon n="copilot" :s="24" /><b>PRE</b></div>
      </div>
    </footer>
  </div>
</template>

<style>
body { overflow: hidden; }
</style>

<style scoped>
* { box-sizing: border-box; }
svg { display: block; flex: none; }
.screen { width: 1366px; height: 768px; overflow: hidden; display: flex; flex-direction: column; background: #d6e0e9; font-family: "Open Sans", "Noto Sans", sans-serif; color: #36404a; position: relative; }
.defs { position: absolute; }
.browser { height: 720px; display: flex; padding: 1px 0 0 1px; flex: none; }
.sidebar { width: 48px; height: 718px; background: #fff; border-radius: 9px; padding-top: 4px; flex: none; color: #414b55; }
.cell { height: 40px; display: flex; align-items: center; justify-content: center; }
.cell.small { height: 32px; padding-right: 1px; }
.cell.small:last-child { height: 27px; }
.tile { width: 32px; height: 32px; border-radius: 6px; background: #d6e0e7; display: flex; align-items: center; justify-content: center; }
.tile.violet { background: #4d20ff; color: #fff; }
.space.one { height: 34px; }
.space.two { height: 30px; }
.main { margin-left: 4px; width: 1311px; display: flex; flex-direction: column; }
.tabs { height: 36px; margin-bottom: 4px; display: flex; align-items: center; }
.tab { width: 31px; height: 36px; display: flex; align-items: center; justify-content: center; position: relative; flex: none; }
.tab.wide { width: 32px; }
.tab.plain { width: 36px; }
.tab.sep::after { content: ""; position: absolute; right: 0; top: 9px; width: 1px; height: 18px; background: #8b949b; }
.group { height: 36px; display: flex; align-items: center; background: #eaeef3; border-radius: 9px; flex: none; }
.group.first { width: 160px; margin: 0 4px; padding-left: 6px; }
.group.second { width: 142px; margin: 0 4px 0 5px; padding-left: 6px; }
.stripe { width: 6px; height: 24px; border-radius: 3px; background: #4d20ff; flex: none; }
.stripe.red { background: #e84c63; margin-right: 1px; }
.active { width: 46px; height: 28px; margin-left: -2px; background: #fff; border-radius: 5px; box-shadow: 0 3px 6px #8a98a590; display: flex; align-items: center; gap: 4px; padding-left: 4px; flex: none; }
.active b { font-weight: 400; font-size: 12px; width: 19px; white-space: nowrap; overflow: hidden; background: linear-gradient(90deg, #555 40%, #ddd); background-clip: text; color: transparent; }
.plus { width: 18px; height: 18px; border-radius: 9px; margin-left: 8px; background: linear-gradient(#222, #222) center / 8px 2px no-repeat, linear-gradient(#222, #222) center / 2px 8px no-repeat, #fff; flex: none; }
.window { display: flex; gap: 19.300px; margin-left: 45px; }
.bars { display: flex; gap: 2px; height: 39px; margin-bottom: 1px; }
.address, .extensions { background: #fff; border-radius: 8px; display: flex; align-items: center; flex: none; }
.address { width: 1101px; padding-left: 10px; }
.navi { margin-right: 20px; }
.navi.dim { color: #c3c8cc; }
.vpn { width: 28px; height: 18px; margin-left: 3px; border: 1px solid #8c74f4; border-radius: 4px; color: #4d20ff; font-size: 10px; line-height: 16px; text-align: center; }
.lock { margin-left: 6px; color: #28313b; }
.url { margin-left: 12px; font-size: 12.500px; letter-spacing: -.16px; color: #7a8590; white-space: nowrap; width: 320px; }
.url em { color: #262d34; font-style: normal; }
.actions { display: flex; margin-left: auto; margin-right: 7px; }
.actions span { width: 30px; height: 24px; display: flex; align-items: center; justify-content: center; }
.actions .profile { width: 24px; margin-left: 3px; background: #e5ebf0; border-radius: 4px; margin-right: 4px; }
.extensions { width: 208px; padding-left: 9px; gap: 16px; }
.extensions .stripe { margin-left: -4px; }
.wheel { width: 16px; height: 16px; border-radius: 8px; background: conic-gradient(red, #f0f, #00f, #0ff, #0f0, #ff0, red); flex: none; }
.bookmarks { height: 32px; margin-bottom: 4px; background: #fff; border-radius: 8px; display: flex; align-items: center; padding-left: 14px; }
.bm { display: flex; align-items: center; gap: 4px; font-size: 12px; letter-spacing: -.3px; white-space: nowrap; flex: none; padding-top: 1px; }
.bm.tight { letter-spacing: -.5px; }
.page { height: 602px; background: #fff; border-radius: 8px; display: flex; overflow: hidden; font-family: "Liberation Serif", serif; color: #000; }
.content { width: 1281px; margin: 8px 0 0 8px; display: flex; flex-direction: column; }
.top { height: 50px; background: #000; color: #fff; display: flex; align-items: center; font-size: 16px; flex: none; }
.logo { margin-left: 28px; margin-top: 2px; }
.brand { width: 140px; margin-left: 372px; text-align: center; }
.hello { width: 120px; margin-left: 423px; text-align: center; }
.power { margin-left: 27px; margin-bottom: 2px; }
.menu { display: flex; height: 37px; flex: none; }
.menu a { background: #006dff; color: #fff; display: flex; align-items: center; justify-content: center; font: 12.800px "Liberation Sans", sans-serif; -webkit-text-stroke: .25px #fff; }
.menu a.on { background: #8c15ba; font-weight: 700; -webkit-text-stroke: 0; }
.filters { margin: 0 30px; border-bottom: 1px solid #808080; display: flex; flex: none; width: 1221px; height: 101px; }
.date { display: flex; flex-direction: column; align-items: center; padding-top: 19px; font-size: 16px; line-height: 18px; }
.date.d0 { width: 131px; margin-left: 153px; }
.date.d1 { width: 132px; margin-left: 40px; }
.field { width: 100%; height: 37px; border-radius: 5px; background: #eaeaea; display: flex; align-items: center; justify-content: space-between; padding: 1px 12px 0 11px; font: 12.800px "Liberation Mono", monospace; color: #000; }
.field svg { margin-bottom: 1px; }
.buttons { display: flex; gap: 10px; margin: 19px 0 0 25px; align-items: flex-start; }
.btn { width: 55px; height: 67px; background: #006dff; border-radius: 5px; border-bottom: 4px solid #808080; }
.btn.big { width: 60px; }
.clock { margin: 20px 0 0 322px; }
.report { display: flex; height: 406px; margin-left: 30px; width: 1221px; }
.grid { width: 1043px; padding-top: 10px; overflow: hidden; flex: none; }
table { width: 1043px; table-layout: fixed; border-collapse: separate; border-spacing: 0; font-size: 12.800px; text-align: center; }
th { height: 25px; padding: 0; background: #006dff; color: #fff; }
th:first-child { border-top-left-radius: 10px; }
th:last-child { border-top-right-radius: 10px; }
td { height: 26px; padding: 0; border-bottom: 1px dotted #a8a8a8; border-right: 1px solid #b2b2b2; }
.scroll { width: 15px; display: flex; flex-direction: column; align-items: center; padding-top: 14px; flex: none; }
.scroll i { width: 7px; height: 92px; background: #ced9e2; border-radius: 2px; margin-top: 5px; }
.total { width: 163px; background: #eaeaea; border-left: 1px solid #808080; display: flex; flex-direction: column; align-items: center; padding-top: 16px; font-size: 32px; line-height: 37px; }
.total strong { color: #006dff; }
.outer { width: 14px; margin-left: 8px; padding-top: 4px; }
.outer i { height: 515px; }
.down { margin-top: 61px; }
.taskbar { height: 48px; background: linear-gradient(90deg, #832c0d, #8a310b 22%, #7c270e 33%, #8c300a 50%, #7b250f 68%, #89220b 78%, #91300a 88%, #842a0d); box-shadow: inset 0 1px #8b5442; color: #fff; display: flex; align-items: center; position: relative; flex: none; }
.weather { width: 138px; padding-left: 20px; position: relative; flex: none; }
.weather b { position: absolute; left: 32px; top: -5px; width: 16px; height: 16px; background: #c4291e; border-radius: 8px; font-size: 11px; font-weight: 400; line-height: 16px; text-align: center; }
.apps { display: flex; width: 796px; border-right: 1px solid #9a5036; height: 48px; align-items: center; flex: none; }
.app { width: 44px; height: 40px; display: flex; align-items: center; justify-content: center; position: relative; color: #fff; flex: none; }
.app.run::after { content: ""; position: absolute; bottom: 0; left: 19px; width: 6px; height: 3px; border-radius: 2px; background: #bd9487; }
.app.current { width: 40px; margin: 0 2px; background: #8c3820; border: 1px solid #94442f; border-radius: 4px; }
.app.current::after { left: 11px; width: 16px; background: #ff8137; }
.pinned { display: flex; width: 93px; border-right: 1px solid #9a5036; height: 48px; align-items: center; padding-left: 2px; flex: none; }
.tray { display: flex; align-items: center; font-size: 12px; }
.chev { margin-left: 70px; }
.lang { width: 22px; margin: 0 16px 0 22px; font-size: 11px; }
.spk { margin-left: 5px; }
.time { width: 70px; margin-left: 1px; margin-right: 1px; display: flex; flex-direction: column; align-items: flex-end; line-height: 16px; font-size: 11.700px; }
.bell { margin-left: 7px; }
.copilot { position: relative; margin-left: 16px; }
.copilot b { position: absolute; left: 5px; top: 15px; padding: 0 3px; background: #ffca22; color: #333; font-size: 6px; line-height: 8px; border-radius: 2px; }
</style>
